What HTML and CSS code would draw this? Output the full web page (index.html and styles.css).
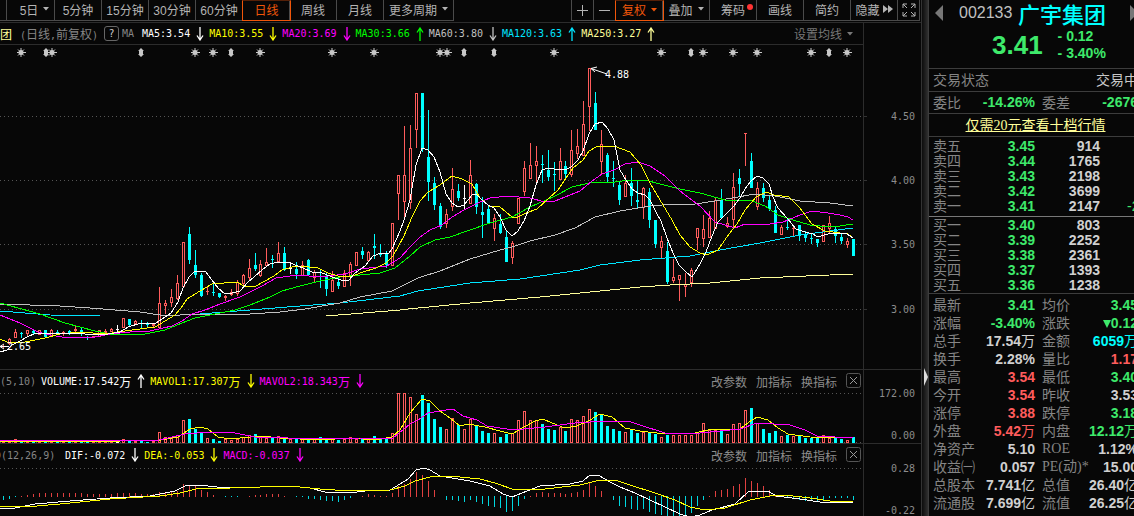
FILE: index.html
```html
<!DOCTYPE html>
<html lang="zh-CN">
<head>
<meta charset="utf-8">
<title>广宇集团 002133</title>
<link rel="stylesheet" href="styles.css">
</head>
<body>
<svg class="defs" width="0" height="0" aria-hidden="true">
  <symbol id="down" viewBox="0 0 8 14"><path d="M4 0V13M1 8.500L4 13L7 8.500" fill="none" stroke="currentColor" stroke-width="1.300"/></symbol>
  <symbol id="up" viewBox="0 0 8 14"><path d="M4 14V1M1 5.500L4 1L7 5.500" fill="none" stroke="currentColor" stroke-width="1.300"/></symbol>
  <symbol id="caret" viewBox="0 0 6 4"><path d="M0 0H6L3 3.500Z" fill="currentColor"/></symbol>
  <symbol id="close" viewBox="0 0 16 16"><rect x=".5" y=".5" width="14" height="14" rx="2" fill="none" stroke="#555"/><path d="M4 4L11 11M11 4L4 11" stroke="#999" fill="none"/></symbol>
</svg>
<div class="app">
  <main class="main">
    <nav class="toolbar">
      <button class="tool stub" aria-label="更多"></button>
      <button class="tool">5日 <svg class="caret"><use href="#caret"/></svg></button>
      <button class="tool">5分钟</button>
      <button class="tool">15分钟</button>
      <button class="tool">30分钟</button>
      <button class="tool">60分钟</button>
      <button class="tool active">日线</button>
      <button class="tool">周线</button>
      <button class="tool">月线</button>
      <button class="tool wide">更多周期<svg class="caret"><use href="#caret"/></svg></button>
      <span class="fill"></span>
      <button class="tool small" aria-label="放大"><svg width="13" height="13"><path d="M6.500 1V12M1 6.500H12" stroke="currentColor"/></svg></button>
      <button class="tool small" aria-label="缩小"><svg width="13" height="13"><path d="M1 6.500H12" stroke="currentColor"/></svg></button>
      <button class="tool active">复权<svg class="caret"><use href="#caret"/></svg></button>
      <button class="tool">叠加<svg class="caret"><use href="#caret"/></svg></button>
      <button class="tool dotted">筹码<span class="dot"></span></button>
      <button class="tool">画线</button>
      <button class="tool">简约</button>
      <button class="tool tight">隐藏<svg width="10" height="8"><path d="M0 0L5 4L0 8ZM5 0L10 4L5 8Z" fill="currentColor"/></svg></button>
      <button class="tool small last" aria-label="全屏"><svg width="14" height="14"><path d="M1 5V1H5M1 1L5 5M9 1H13V5M13 1L9 5M1 9V13H5M1 13L5 9M13 9V13H9M13 13L9 9" stroke="currentColor" fill="none"/></svg></button>
    </nav>

    <section class="pane">
      <div class="plot">
        <header class="head ruled">
          <span class="cn name">团</span>
          <span class="dim adj">(<span class="cn">日线</span>,<span class="cn">前复权</span>)</span>
          <button class="help">?</button>
          <span class="dim ma">MA</span>
          <span class="item white">MA5:3.54<svg><use href="#down"/></svg></span>
          <span class="item yellow">MA10:3.55<svg><use href="#down"/></svg></span>
          <span class="item magenta">MA20:3.69<svg><use href="#down"/></svg></span>
          <span class="item green">MA30:3.66<svg><use href="#up"/></svg></span>
          <span class="item grey">MA60:3.80<svg><use href="#down"/></svg></span>
          <span class="item cyan">MA120:3.63<svg><use href="#up"/></svg></span>
          <span class="item pale">MA250:3.27<svg><use href="#up"/></svg></span>
          <span class="fill"></span>
          <button class="act set">设置均线<svg class="caret"><use href="#caret"/></svg></button>
        </header>
        <svg class="chart" id="price" viewBox="0 45 863 324"></svg>
      </div>
      <div class="axis">
        <svg viewBox="0 45 57 324"><path d="M0 116.500H3M0 180.500H3M0 244.500H3M0 309.500H3" stroke="#333"/><text x="51" y="120">4.50</text><text x="51" y="184">4.00</text><text x="51" y="248">3.50</text><text x="51" y="313">3.00</text></svg>
      </div>
    </section>

    <section class="pane">
      <div class="plot">
        <header class="head">
          <span class="dim vol">(5,10)</span>
          <span class="item white">VOLUME:17.542<span class="cn">万</span><svg><use href="#up"/></svg></span>
          <span class="item yellow">MAVOL1:17.307<span class="cn">万</span><svg><use href="#down"/></svg></span>
          <span class="item magenta">MAVOL2:18.343<span class="cn">万</span><svg><use href="#down"/></svg></span>
          <span class="fill"></span>
          <button class="act">改参数</button><button class="act">加指标</button><button class="act">换指标</button>
          <button class="act x" aria-label="关闭"><svg width="16" height="16"><use href="#close"/></svg></button>
        </header>
        <svg class="chart" id="volume" viewBox="0 392 863 51"></svg>
      </div>
      <div class="axis">
        <svg viewBox="0 392 57 51"><text x="51" y="397">172.00</text><text x="51" y="439">0.00</text></svg>
      </div>
    </section>

    <section class="pane">
      <div class="plot">
        <header class="head">
          <span class="dim macd">D(12,26,9)</span>
          <span class="item white">DIF:-0.072<svg><use href="#down"/></svg></span>
          <span class="item yellow">DEA:-0.053<svg><use href="#down"/></svg></span>
          <span class="item magenta">MACD:-0.037<svg><use href="#down"/></svg></span>
          <span class="fill"></span>
          <button class="act">改参数</button><button class="act">加指标</button><button class="act">换指标</button>
          <button class="act x" aria-label="关闭"><svg width="16" height="16"><use href="#close"/></svg></button>
        </header>
        <svg class="chart" id="macd" viewBox="0 466 863 50"></svg>
      </div>
      <div class="axis">
        <svg viewBox="0 466 57 50"><text x="51" y="472">0.28</text><text x="51" y="514">-0.22</text></svg>
      </div>
    </section>
  </main>

  <div class="split"><svg width="4" height="20"><path d="M0 0L4 9L0 18Z" fill="#ddd"/></svg></div>

  <aside class="side">
    <div class="inner">
      <header class="stock">
        <div class="title">
          <button class="arrow" aria-label="上一只"><svg width="8" height="16"><path d="M8 0V16L0 8Z" fill="#777"/></svg></button>
          <span class="code">002133</span><h1>广宇集团</h1>
          <button class="arrow next" aria-label="下一只"><svg width="8" height="16"><path d="M0 0V16L8 8Z" fill="#777"/></svg></button>
        </div>
        <div class="quote">
          <span class="last-price">3.41</span>
          <span class="change">- 0.12<br>- 3.40%</span>
        </div>
      </header>
      <div class="row line"><span>交易状态</span><span class="v state">交易中</span></div>
      <div class="row line pair"><span>委比</span><b class="g">-14.26%</b><span>委差</span><b class="g">-2676</b></div>
      <div class="row line promo"><a href="#levels">仅需20元查看十档行情</a></div>
      <table class="book" id="levels">
        <tbody>
          <tr><th>卖五</th><td class="g">3.45</td><td>914</td><td></td></tr>
          <tr><th>卖四</th><td class="g">3.44</td><td>1765</td><td></td></tr>
          <tr><th>卖三</th><td class="g">3.43</td><td>2198</td><td></td></tr>
          <tr><th>卖二</th><td class="g">3.42</td><td>3699</td><td></td></tr>
          <tr><th>卖一</th><td class="g">3.41</td><td>2147</td><td class="g delta">-2</td></tr>
        </tbody>
      </table>
      <table class="book buy">
        <tbody>
          <tr><th>买一</th><td class="g">3.40</td><td>803</td><td></td></tr>
          <tr><th>买二</th><td class="g">3.39</td><td>2252</td><td></td></tr>
          <tr><th>买三</th><td class="g">3.38</td><td>2361</td><td></td></tr>
          <tr><th>买四</th><td class="g">3.37</td><td>1393</td><td></td></tr>
          <tr><th>买五</th><td class="g">3.36</td><td>1238</td><td></td></tr>
        </tbody>
      </table>
      <div class="facts">
        <div class="pair"><span>最新</span><b class="g">3.41</b><span>均价</span><b class="g">3.45</b></div>
        <div class="pair"><span>涨幅</span><b class="g">-3.40%</b><span>涨跌</span><b class="g"><svg width="8" height="8"><path d="M0 0H8L4 8Z" fill="currentColor"/></svg>0.12</b></div>
        <div class="pair"><span>总手</span><b>17.54<i>万</i></b><span>金额</span><b class="c">6059<i>万</i></b></div>
        <div class="pair"><span>换手</span><b>2.28%</b><span>量比</span><b class="r">1.17</b></div>
        <div class="pair"><span>最高</span><b class="r">3.54</b><span>最低</span><b class="g">3.40</b></div>
        <div class="pair"><span>今开</span><b class="r">3.54</b><span>昨收</span><b>3.53</b></div>
        <div class="pair"><span>涨停</span><b class="r">3.88</b><span>跌停</span><b class="g">3.18</b></div>
        <div class="pair"><span>外盘</span><b class="r">5.42<i>万</i></b><span>内盘</span><b class="g">12.12<i>万</i></b></div>
        <div class="pair"><span>净资产</span><b>5.10</b><span class="lat">ROE</span><b>1.12%</b></div>
        <div class="pair"><span>收益㈠</span><b>0.057</b><span class="lat">PE(动)*</span><b>15.00</b></div>
        <div class="pair"><span>总股本</span><b>7.741<i>亿</i></b><span>总值</span><b>26.40<i>亿</i></b></div>
        <div class="pair"><span>流通股</span><b>7.699<i>亿</i></b><span>流值</span><b>26.25<i>亿</i></b></div>
      </div>
    </div>
  </aside>
</div>
<script src="chart.js"></script>
</body>
</html>
```

FILE: styles.css
```css
* { box-sizing: border-box; }
body {
  margin: 0;
  background: #070707;
  color: #c0c0c0;
  font-family: "Liberation Sans", "Noto Sans CJK SC", sans-serif;
  font-size: 12px;
  overflow: hidden;
}
button {
  margin: 0;
  padding: 0;
  border: 0;
  background: none;
  color: inherit;
  font: inherit;
  white-space: nowrap;
}
.defs { position: absolute; }
.app { display: flex; min-height: 100vh; }
.main { flex: 1; min-width: 0; }
.fill { flex: 1; }
.caret { width: 6px; height: 4px; flex: none; }

/* period toolbar */
.toolbar {
  display: flex;
  height: 23px;
  padding-right: 1px;
  border-bottom: 1px solid #2c2c2c;
}
.tool {
  flex: none;
  display: flex;
  align-items: center;
  justify-content: center;
  gap: 5px;
  width: 47px;
  height: 21px;
  padding-bottom: 2px;
  border-left: 1px solid #4a4a4a;
  border-bottom: 1px solid #4a4a4a;
  color: #b4b4b4;
}
.tool.stub { width: 6px; border-left: 0; }
.tool.stub + .tool { width: 48px; padding-left: 8px; }
.tool.wide { width: 71px; border-right: 1px solid #4a4a4a; }
.tool.small { width: 22px; padding-bottom: 0; }
.tool.last { width: 23px; border-right: 1px solid #4a4a4a; }
.tool.tight { gap: 3px; }
.tool.active {
  position: relative;
  width: 49px;
  margin-right: -2px;
  border: 1px solid #f0560a;
  border-top-color: #552008;
  color: #f0560a;
}
.dotted { position: relative; }
.dot {
  position: absolute;
  top: 4px;
  right: 3px;
  width: 6px;
  height: 6px;
  border-radius: 50%;
  background: #f33;
}

/* chart panes */
.pane { display: flex; border-bottom: 1px solid #2c2c2c; }
.pane:last-child { border-bottom: 0; }
.plot { flex: 1; min-width: 0; }
.axis {
  flex: none;
  width: 58px;
  display: flex;
  align-items: flex-end;
  border-left: 1px solid #2c2c2c;
}
.axis svg { display: block; width: 100%; overflow: visible; }
.axis text {
  fill: #8c8c8c;
  font: 10px "DejaVu Sans Mono", monospace;
  text-anchor: end;
}
.chart { display: block; width: 100%; }
.chart text { fill: #fff; font: 10px "DejaVu Sans Mono", monospace; }
.head {
  display: flex;
  align-items: center;
  height: 22px;
  font: 10px "DejaVu Sans Mono", "Noto Sans CJK SC", monospace;
  white-space: nowrap;
}
.ruled { border-bottom: 1px solid #2c2c2c; }
.cn { font: 12px "Noto Sans CJK SC", sans-serif; }
.dim { color: #858585; }
.name { width: 20px; color: #ff9; }
.adj { width: 84px; }
.help {
  width: 15px;
  height: 15px;
  border: 1px solid #666;
  border-radius: 3px;
  color: #ccc;
}
.ma { width: 23px; padding-left: 3px; }
.vol { width: 41px; }
.macd { width: 65px; text-indent: -5px; }
.item { display: flex; align-items: center; margin-right: 5px; }
.item svg { width: 8px; height: 14px; margin-left: 6px; }
.white { color: #fff; }
.yellow { color: #ff0; }
.magenta { color: #f0f; }
.green { color: #0f0; }
.grey { color: #c0c0c0; }
.cyan { color: #00e5ff; }
.pale { color: #ff9; }
.act {
  display: flex;
  align-items: center;
  margin-right: 9px;
  color: #8c8c8c;
  font: 12px "Noto Sans CJK SC", sans-serif;
}
.act.set { gap: 5px; margin-right: 10px; color: #777; }
.act.x { margin-right: 1px; }

.split {
  flex: none;
  width: 7px;
  display: flex;
  align-items: flex-start;
  justify-content: flex-end;
  padding-top: 368px;
  border-left: 1px solid #333;
  background: linear-gradient(90deg, #0c0c0c, #303030);
}

/* quote panel */
.side {
  flex: none;
  width: 206px;
  overflow: hidden;
  border-left: 1px solid #3c3c3c;
  font-size: 14px;
  color: #858585;
}
.inner { width: 209px; }
.stock { height: 68px; }
.title { display: flex; align-items: center; height: 26px; padding-left: 6px; }
.arrow { width: 8px; height: 16px; }
.arrow svg { display: block; }
.code { margin-left: 16px; width: 59px; color: #c0c0c0; font-size: 16px; }
.title h1 {
  margin: 0;
  width: 112px;
  color: #0ff;
  font: 500 22px/26px "Noto Sans CJK SC", sans-serif;
}
.quote {
  display: flex;
  align-items: center;
  gap: 15px;
  height: 38px;
  padding-left: 63px;
  font-weight: 700;
  color: #3ee96b;
}
.last-price { font-size: 26px; }
.change { font-size: 14px; line-height: 17px; }
.row {
  display: flex;
  align-items: center;
  height: 23px;
  padding: 0 0 2px 4px;
  border-top: 1px solid #3c3c3c;
}
.row.pair { height: 22px; }
.state { margin-left: auto; color: #c8c8c8; }
.pair {
  display: grid;
  grid-template-columns: 44px 58px 28px 1fr;
  align-items: center;
  white-space: nowrap;
}
.pair > :nth-child(3) { padding-left: 7px; }
.pair b, .book td { color: #d0d0d0; font-weight: 700; text-align: right; }
.pair i { font: 14px "Noto Sans CJK SC", sans-serif; line-height: 1; }
.promo { justify-content: center; }
.promo a {
  color: #ff9;
  font-family: "Liberation Serif", "Noto Sans CJK SC", serif;
}
.book {
  width: 100%;
  padding: 2px 0 2px 4px;
  border-top: 1px solid #3c3c3c;
  border-spacing: 0;
  table-layout: fixed;
}
.book.buy { border-top-color: #777; padding: 1px 0 0 4px; }
.book tr { height: 15px; }
.book th, .book td { padding: 0; line-height: 15px; }
.book th { width: 44px; font-weight: 400; text-align: left; }
.book td:nth-child(2) { width: 58px; }
.book td:nth-child(3) { width: 65px; }
.book .delta { padding-left: 27px; font-weight: 400; text-align: left; }
.facts { padding: 2px 0 0 4px; border-top: 1px solid #3c3c3c; }
.facts .pair { height: 18px; line-height: 18px; }
.lat { font-family: "Liberation Serif", "Noto Sans CJK SC", serif; }
.side .g { color: #3ee96b; }
.side .r { color: #ff5c5c; }
.side .c { color: #0ff; }
```

FILE: chart.js
```js
const NS = "http://www.w3.org/2000/svg";
const RED = "#ff5c5c", CYAN = "#00ffff", BG = "#070707";

/* one bar per session: kind, high, body top, body bottom, low */
const bars = `r345,346,347,348 r338,339,344,345 r329,332,338,338 c332,333,334,338 r330,330,334,336 c330,331,333,334 r330,330,335,335 c330,330,337,337 r329,330,336,337 c330,332,333,335
r331,332,334,336 c330,331,333,335 r325,329,331,332 c328,330,334,336 c336,337,338,340 r336,336,338,338 r330,330,337,337 r329,331,333,334 r328,329,332,332 w325,329,329,332
r318,318,328,328 c319,319,325,326 r320,321,324,325 c320,323,324,328 c322,324,325,327 r324,324,326,327 r287,303,328,328 r300,303,306,314 r289,297,303,307 r275,283,299,300
r242,242,287,287 c227,234,260,264 c250,265,275,278 c273,275,296,297 r287,291,291,295 c283,292,292,296 c293,293,297,298 r295,296,298,301 r289,292,295,296 r280,282,294,296
r274,275,284,287 r259,268,278,280 c253,265,269,271 r260,264,276,277 r248,262,266,266 c255,259,259,268 r242,253,262,263 c247,253,270,271 w262,268,269,274 c262,269,274,279
r261,265,276,276 c259,260,275,275 r270,272,278,283 c269,272,273,288 c273,277,289,296 r271,280,292,292 c278,282,286,289 r270,273,287,287 r262,264,276,286 r252,252,266,266
c247,251,255,259 r251,252,261,261 c234,246,248,259 c244,253,255,257 c251,253,265,268 r223,223,266,266 r175,175,194,220 r126,175,202,220 r125,148,203,209 r93,93,130,148
c93,93,148,152 c110,157,182,201 c177,183,205,210 c203,206,227,229 r209,214,224,228 r168,189,207,211 c184,191,198,201 w185,198,198,210 r160,175,204,204 c183,184,207,214
c197,212,215,238 c205,209,223,223 r214,218,229,241 c214,224,233,234 c231,237,262,262 r241,243,258,264 r198,198,224,224 r161,168,192,196 r143,165,179,179 r146,161,166,184
c155,164,164,183 c150,170,177,181 c162,174,174,191 r148,161,180,180 c161,166,174,179 r130,150,175,177 r129,146,154,159 r101,124,156,156 r68,68,107,131 c92,103,130,130
r130,144,162,174 c153,155,177,182 c161,178,178,187 c181,185,200,205 r175,183,197,197 c168,183,196,206 c181,200,202,209 r187,188,208,219 c188,192,220,228 c220,220,244,248
r236,241,248,258 c242,251,282,284 r259,277,281,283 r275,275,280,301 r273,284,287,297 r268,270,283,287 r228,228,238,250 r215,229,239,247 r211,218,238,238 r198,200,229,229
c189,200,218,218 r217,223,227,228 r173,187,220,228 c169,178,184,196 r133,133,133,166 c153,161,188,188 r182,188,207,210 c183,188,198,202 c196,200,209,211 c206,210,233,233
r225,227,235,235 c218,227,227,230 r225,228,228,236 c225,225,236,241 c231,235,238,242 c234,238,238,244 c239,239,243,247 r225,225,242,242 r216,223,229,233 c227,229,236,243
c233,237,241,244 r238,241,245,248 c239,239,256,256`.split(/\s+/).map(s => [s[0], ...s.slice(1).split(",").map(Number)]);

const volumes = [1,2,4,2,2,1,1,1,1,1,1,1,3,2,1,1,2,1,1,1,4,2,2,2,1,2,11,6,6,8,23,24,14,10,5,4,2,4,3,4,6,8,9,6,5,5,7,5,4,5,
4,4,4,6,5,4,3,4,6,4,4,4,7,4,4,10,50,50,46,29,48,40,24,16,14,25,18,14,24,17,12,10,10,6,9,10,23,32,23,23,19,14,13,16,12,24,23,27,34,31,
29,17,14,12,11,14,10,11,11,9,6,8,8,8,8,8,11,20,13,13,13,9,19,20,33,35,20,14,10,12,7,8,7,7,5,5,5,8,5,6,4,3,6];

const hist = [-4,-3,-1,1,2,3,4,4,4,4,4,4,4,4,3,3,3,3,3,4,4,4,4,3,3,3,5,5,6,6,13,12,11,7,5,2,0,-1,-1,-1,0,1,2,2,3,3,3,1,0,-1,
-1,-3,-3,-4,-5,-5,-6,-4,-2,0,1,3,2,1,1,4,11,13,18,25,22,16,7,0,-4,-4,-5,-6,-4,-6,-8,-10,-11,-12,-16,-15,-10,-3,1,4,5,4,4,4,3,4,5,7,14,11,
6,0,-4,-10,-11,-13,-14,-13,-16,-18,-19,-20,-21,-21,-20,-17,-10,-4,1,6,7,8,11,13,19,16,14,11,7,2,-1,-2,-3,-4,-5,-5,-5,-4,-2,-2,-2,-2,-4];

const xOf = i => 3 + 6 * i - (i > 42 ? 1 : 0) - (i > 93 ? 1 : 0);

function add(svg, tag, attrs, text) {
  const el = document.createElementNS(NS, tag);
  for (const k in attrs) el.setAttribute(k, attrs[k]);
  if (text) el.textContent = text;
  svg.appendChild(el);
}
const rect = (svg, x, y, w, h, fill) => add(svg, "rect", { x, y, width: w, height: h, fill, "shape-rendering": "crispEdges" });
const line = (svg, color, points) => add(svg, "polyline", { points, fill: "none", stroke: color, "shape-rendering": "crispEdges" });
const grid = (svg, ys) => ys.forEach(y => add(svg, "path", { d: `M0 ${y}.5H863`, stroke: "#555", "stroke-dasharray": "1 3", "shape-rendering": "crispEdges" }));

function box(svg, kind, x, top, bottom) {
  rect(svg, x - 1, top, 3, Math.max(1, bottom - top), kind === "r" ? RED : kind === "c" ? CYAN : "#fff");
  if (kind === "r" && bottom - top > 2) rect(svg, x, top + 1, 1, bottom - top - 2, BG);
}

const price = document.getElementById("price");
grid(price, [116, 180, 244, 309]);
[21, 52, 195, 213, 260, 332, 374, 440, 447, 554, 661, 703, 733, 757, 811, 847].forEach(x => {
  add(price, "path", { d: `M${x} 48V57M${x - 4} 52.500H${x + 5}M${x - 3} 49.500L${x + 3} 55.500M${x + 3} 49.500L${x - 3} 55.500`, stroke: "#c8c8c8" });
  add(price, "circle", { cx: x, cy: 52.5, r: 2.5, fill: "#c8c8c8" });
});
[46, 141, 231, 464, 494, 691, 829].forEach(x =>
  add(price, "path", { d: `M${x} 48L${x + 3} 51H${x + 2}V54H${x + 3}L${x} 57L${x - 3} 54H${x - 2}V51H${x - 3}Z`, fill: "#c8c8c8" }));
bars.forEach(([kind, hi, top, bottom, lo], i) => {
  rect(price, xOf(i), hi, 1, Math.max(1, lo - hi), kind === "r" ? RED : kind === "c" ? CYAN : "#fff");
  box(price, kind, xOf(i), top, bottom);
});
line(price, "#ffff99", "326,316 400,310 408,309 470,303 540,297 580,293 640,287 670,285 710,283 760,278 853,274");
line(price, "#00e5ff", "0,311 50,315 100,316 160,316 200,314 250,310 300,306 340,303 400,296 418,291 470,283 520,279 560,273 580,270 600,265 640,260 690,256 720,250 760,243 800,235 853,228");
line(price, "#c0c0c0", "0,304 60,306 90,308 115,310 140,312 160,315 180,315 215,314 250,314 280,312 305,309 340,303 360,297 392,291 418,278 440,271 470,259 500,250 512,247 530,241 555,235 575,228 595,217 620,211 650,206 662,205 695,204 715,201 755,194 775,196 800,201 830,203 853,206");
line(price, "#00ff00", "0,303 40,314 65,323 95,331 115,335 145,334 165,330 182,323 195,318 215,314 235,310 250,305 270,297 282,291 300,286 320,281 340,277 380,273 395,268 410,256 420,247 435,240 450,237 470,230 490,223 512,217 530,207 555,196 572,187 589,183 615,182 630,180 645,180 660,184 680,189 700,193 725,200 752,201 765,206 778,215 793,220 810,225 830,227 840,226 853,224");
line(price, "#ff00ff", "0,315 20,323 38,332 50,335 62,337 95,337 110,334 130,332 150,331 172,326 182,321 192,314 205,310 220,304 240,297 262,286 276,278 297,275 320,277 345,274 360,269 387,266 400,258 410,247 420,237 430,230 442,225 452,217 464,210 480,202 490,198 508,196 530,198 545,202 555,201 570,195 580,191 592,181 602,174 614,170 625,164 638,162 650,166 665,176 680,191 700,206 715,222 735,228 745,224 770,224 783,222 800,215 812,211 828,213 840,215 848,217 853,220");
line(price, "#ffff00", "0,339 7,342 25,342 45,338 60,334 80,332 105,334 125,331 155,327 165,321 175,315 181,308 187,299 200,291 212,284 237,282 244,286 256,286 263,282 274,276 282,270 292,267 300,266 318,268 328,273 338,276 350,277 363,272 376,268 386,263 393,256 404,236 412,217 420,201 428,192 440,185 452,176 462,179 472,184 480,198 489,206 500,207 512,217 518,217 526,213 537,209 548,199 558,190 566,178 573,168 583,160 589,151 598,146 614,146 630,152 641,165 650,183 660,200 672,220 680,235 690,247 700,253 707,255 718,250 729,234 737,224 745,210 756,197 766,192 774,195 789,197 800,208 812,224 825,231 840,233 848,234 853,238");
line(price, "#ffffff", "0,352 7,350 12,345 20,341 27,337 36,333 75,333 85,334 97,335 108,334 120,332 128,327 141,323 156,323 165,317 171,313 178,302 183,288 189,277 195,271 206,272 212,280 218,288 225,294 232,293 240,291 248,282 254,277 262,270 270,264 278,262 290,263 303,268 312,272 320,272 332,277 344,281 349,280 355,273 365,266 373,256 381,253 388,254 392,249 400,231 404,220 410,200 416,165 422,148 428,150 434,157 440,172 446,194 452,203 458,207 464,205 472,195 476,194 482,200 488,205 494,208 500,217 506,230 512,236 518,231 524,221 530,206 536,185 542,170 548,168 554,169 565,170 571,167 578,160 583,151 589,134 595,124 602,122 608,129 614,140 620,170 626,180 632,189 638,193 645,195 650,200 656,212 661,221 667,238 673,253 679,265 686,272 692,277 700,264 706,252 712,236 718,222 723,217 733,207 740,198 745,189 751,181 757,176 763,178 769,184 773,197 778,208 787,218 796,229 805,232 813,234 817,237 828,234 835,233 847,234 853,238");
add(price, "path", { d: "M591 68.500L607 74M597 67L591 68.500L595 72M0 346.500H9M4 344L0 346.500L4 349", stroke: "#fff", fill: "none" });
add(price, "text", { x: 605, y: 78 }, "4.88");
add(price, "text", { x: 7, y: 350 }, "2.65");

const volume = document.getElementById("volume");
grid(volume, [393, 442]);
const flips = { 100: "c", 123: "r", 48: "r", 77: "r" };
volumes.forEach((v, i) => box(volume, flips[i] || bars[i][0], xOf(i), 443 - v, 443));
line(volume, "#ffff00", "0,441 120,441 135,440 155,441 178,437 190,429 200,427 208,429 218,437 230,439 250,437 262,436 280,438 320,440 350,438 375,440 392,437 400,430 410,413 422,399 430,401 440,411 450,418 460,426 468,424 485,427 500,431 512,434 524,427 535,421 543,419 552,423 565,428 577,426 590,420 600,414 612,417 625,428 640,431 665,434 695,433 712,429 740,429 749,422 757,417 768,420 778,428 788,434 810,437 853,438");
line(volume, "#ff00ff", "0,440 155,441 185,434 210,432 235,433 255,437 320,439 360,438 393,438 410,424 418,420 428,413 440,411 453,409 463,416 477,420 487,426 500,428 513,430 545,427 575,423 605,421 628,421 640,425 665,433 700,433 740,429 757,423 790,425 805,430 817,436 853,438");

const macd = document.getElementById("macd");
grid(macd, [468]);
hist.forEach((v, i) => {
  if (v) rect(macd, xOf(i), v > 0 ? 497 - v : 496, 1, Math.abs(v), v > 0 ? "#e04040" : "#00d8e0");
});
line(macd, "#ffffff", "0,508 15,508 35,504 70,501 110,498 150,496 175,491 187,485 200,485 225,488 260,487 290,486 310,488 325,492 350,493 365,491 390,490 400,484 408,479 416,470 424,468 430,470 440,476 470,481 490,486 503,494 512,497 522,493 540,486 570,484 583,481 590,475 598,475 610,482 620,487 635,493 650,500 665,507 680,514 690,517 700,515 712,510 735,504 748,492 768,491 776,496 800,499 820,502 853,503");
line(macd, "#ffff00", "0,506 25,507 60,504 110,499 160,496 180,493 200,488 230,488 290,486 320,489 350,491 390,490 405,486 415,481 430,477 450,476 480,479 495,483 515,490 545,489 580,485 600,480 615,480 630,485 655,493 675,500 690,507 705,510 725,508 750,500 770,496 785,495 810,498 830,501 853,501");
```
